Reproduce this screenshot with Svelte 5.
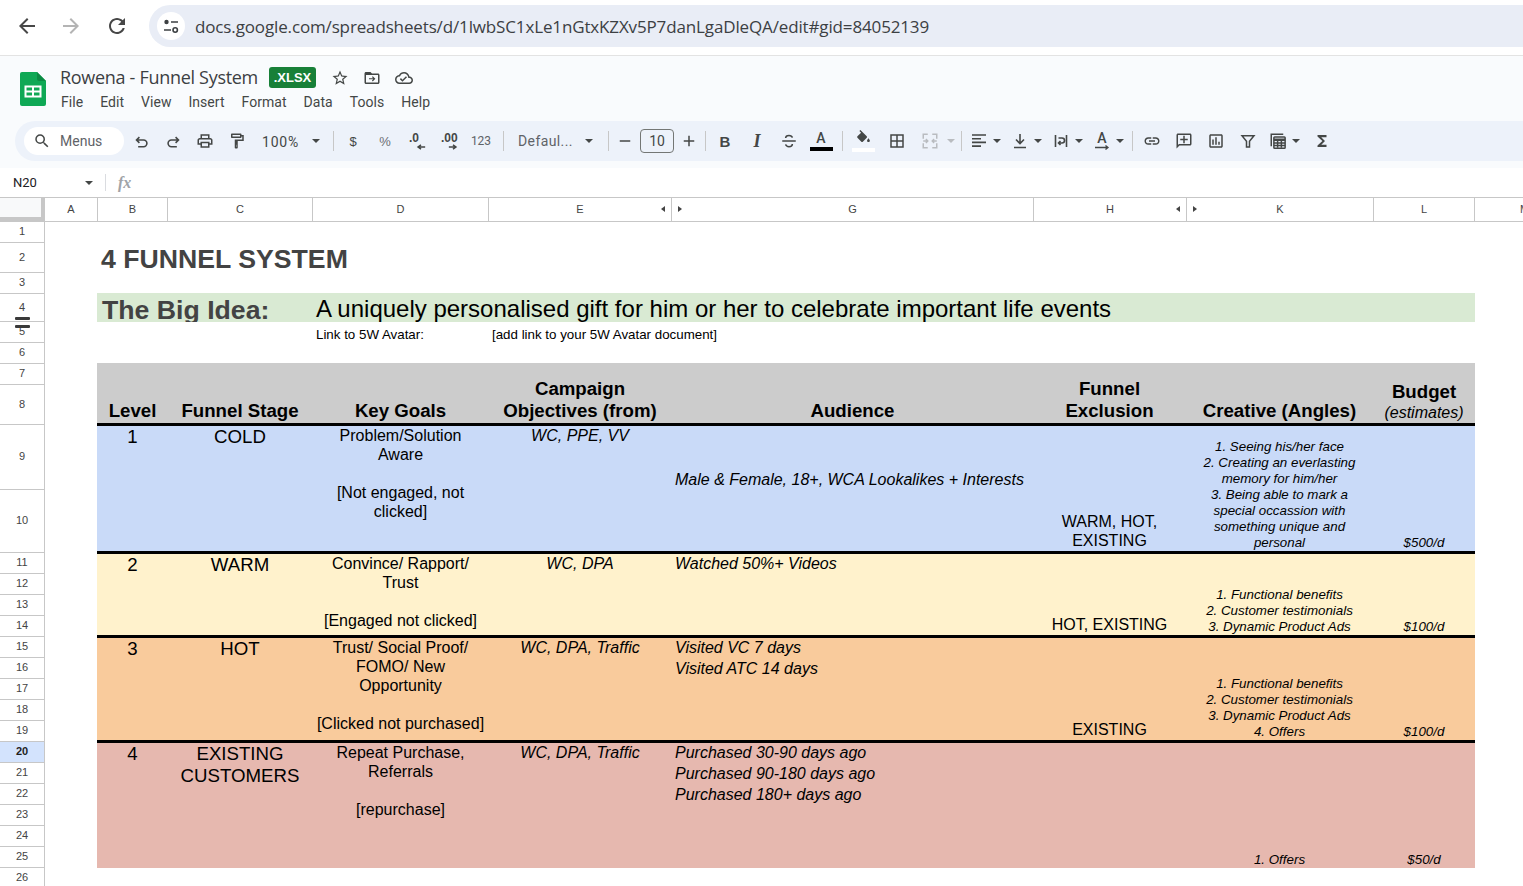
<script>
  const cols = ['A','B','C','D','E','G','H','K','L','M'];
  const rows = Array.from({ length: 26 }, (_, i) => i + 1);
  const bands = [
    { cls:'blue', level:'1', stage:'COLD', goals:'Problem/Solution\nAware\n\n[Not engaged, not\nclicked]', obj:'WC, PPE, VV',
      aud:'Male & Female, 18+, WCA Lookalikes + Interests', audCls:'mid', excl:'WARM, HOT,\nEXISTING',
      creative:'1. Seeing his/her face\n2. Creating an everlasting\nmemory for him/her\n3. Being able to mark a\nspecial occassion with\nsomething unique and\npersonal', budget:'$500/d' },
    { cls:'yellow', level:'2', stage:'WARM', goals:'Convince/ Rapport/\nTrust\n\n[Engaged not clicked]', obj:'WC, DPA',
      aud:'Watched 50%+ Videos', audCls:'', excl:'HOT, EXISTING',
      creative:'1. Functional benefits\n2. Customer testimonials\n3. Dynamic Product Ads', budget:'$100/d' },
    { cls:'orange', level:'3', stage:'HOT', goals:'Trust/ Social Proof/\nFOMO/ New\nOpportunity\n\n[Clicked not purchased]', obj:'WC, DPA, Traffic',
      aud:'Visited VC 7 days\nVisited ATC 14 days', audCls:'', excl:'EXISTING',
      creative:'1. Functional benefits\n2. Customer testimonials\n3. Dynamic Product Ads\n4. Offers', budget:'$100/d' },
    { cls:'red', level:'4', stage:'EXISTING\nCUSTOMERS', goals:'Repeat Purchase,\nReferrals\n\n[repurchase]', obj:'WC, DPA, Traffic',
      aud:'Purchased 30-90 days ago\nPurchased 90-180 days ago\nPurchased 180+ days ago', audCls:'', excl:'',
      creative:'1. Offers', budget:'$50/d' }
  ];
</script>

<div class="page">
  <header class="chrome">
    <button class="nav" aria-label="Back"><svg viewBox="0 0 24 24"><path d="M20 11H7.830l5.590-5.590L12 4l-8 8 8 8 1.410-1.410L7.830 13H20v-2z"/></svg></button>
    <button class="nav off" aria-label="Forward"><svg viewBox="0 0 24 24"><path d="M4 11h12.170l-5.590-5.590L12 4l8 8-8 8-1.410-1.410L16.170 13H4v-2z"/></svg></button>
    <button class="nav reload" aria-label="Reload"><svg viewBox="0 0 24 24"><path d="M17.650 6.350C16.200 4.900 14.210 4 12 4c-4.420 0-7.990 3.580-7.990 8s3.570 8 7.990 8c3.730 0 6.840-2.550 7.730-6h-2.080c-.82 2.330-3.040 4-5.650 4-3.310 0-6-2.690-6-6s2.690-6 6-6c1.660 0 3.140.69 4.220 1.780L13 11h7V4l-2.350 2.350z"/></svg></button>
    <div class="pill">
      <span class="site"><svg viewBox="0 0 18 18"><circle cx="4.500" cy="5" r="2.200" fill="#3c4043"/><path d="M9 5h7M2 13h7" stroke="#3c4043" stroke-width="1.700" fill="none"/><circle cx="13.200" cy="13" r="2.200" fill="none" stroke="#3c4043" stroke-width="1.600"/></svg></span>
      <span class="url">docs.google.com/spreadsheets/d/1lwbSC1xLe1nGtxKZXv5P7danLgaDleQA/edit#gid=84052139</span>
    </div>
  </header>

  <section class="docbar">
    <svg class="logo" viewBox="0 0 26 34"><path d="M2 0h15l9 9v23a2 2 0 0 1-2 2H2a2 2 0 0 1-2-2V2a2 2 0 0 1 2-2z" fill="#0fa855"/><path d="M17 0l9 9h-7a2 2 0 0 1-2-2z" fill="#0b8a43"/><path d="M5.500 14.500h15v10h-15z" fill="none" stroke="#fff" stroke-width="2"/><path d="M5.500 19.500h15M13 14.500v10" stroke="#fff" stroke-width="2"/></svg>
    <div class="docinfo">
      <div class="titlerow">
        <span class="doctitle">Rowena - Funnel System</span>
        <span class="badge">.XLSX</span>
        <svg class="ic star" viewBox="0 0 24 24"><path d="M22 9.240l-7.190-.62L12 2 9.190 8.630 2 9.240l5.460 4.730L5.820 21 12 17.270 18.180 21l-1.630-7.030L22 9.240zM12 15.400l-3.760 2.270 1-4.280-3.320-2.880 4.380-.38L12 6.100l1.710 4.040 4.380.38-3.320 2.880 1 4.280L12 15.400z"/></svg>
        <svg class="ic folder" viewBox="0 0 24 24"><path d="M20 6h-8l-2-2H4c-1.100 0-2 .9-2 2v12c0 1.100.9 2 2 2h16c1.100 0 2-.9 2-2V8c0-1.100-.9-2-2-2zm0 12H4V8h16v10z"/><path d="M13 9.500l-1.100 1.100 1.600 1.600H8v1.600h5.500l-1.600 1.600 1.100 1.100 3.500-3.500z"/></svg>
        <svg class="ic cloud" viewBox="0 0 24 24"><path d="M19.350 10.040C18.670 6.590 15.640 4 12 4 9.110 4 6.600 5.640 5.350 8.040 2.340 8.360 0 10.910 0 14c0 3.310 2.690 6 6 6h13c2.760 0 5-2.240 5-5 0-2.640-2.050-4.780-4.650-4.960zM19 18H6c-2.210 0-4-1.790-4-4 0-2.050 1.530-3.760 3.560-3.970l1.070-.11.5-.95C8.080 7.140 9.940 6 12 6c2.620 0 4.880 1.860 5.390 4.430l.3 1.500 1.530.11c1.560.1 2.780 1.410 2.780 2.960 0 1.650-1.350 3-3 3zm-9-3.820l-2.090-2.090L6.500 13.500 10 17l6.010-6.010-1.410-1.410z"/></svg>
      </div>
      <nav class="menu">
        {#each ['File','Edit','View','Insert','Format','Data','Tools','Help'] as m}<span>{m}</span>{/each}
      </nav>
    </div>
  </section>

  <section class="toolwrap">
    <div class="toolbar">
      <div class="search">
        <svg class="ic" viewBox="0 0 24 24"><path d="M15.500 14h-.79l-.28-.27A6.470 6.470 0 0 0 16 9.500 6.500 6.500 0 1 0 9.500 16c1.610 0 3.090-.59 4.230-1.570l.27.28v.79l5 4.990L20.490 19l-4.990-5zm-6 0C7.010 14 5 11.990 5 9.500S7.010 5 9.500 5 14 7.010 14 9.500 11.990 14 9.500 14z"/></svg>
        <span>Menus</span>
      </div>
      <span class="b"><svg class="st und" viewBox="0 0 18 18"><path d="M6.500 2.500L3 6l3.500 3.500M3 6h8.500a4 4 0 0 1 0 8H5"/></svg></span>
      <span class="b"><svg class="st und" viewBox="0 0 18 18"><path d="M11.500 2.500L15 6l-3.500 3.500M15 6H6.500a4 4 0 0 0 0 8H13"/></svg></span>
      <span class="b"><svg class="ic" viewBox="0 0 24 24"><path d="M19 8h-1V3H6v5H5c-1.660 0-3 1.340-3 3v6h4v4h12v-4h4v-6c0-1.660-1.340-3-3-3zM8 5h8v3H8V5zm8 12v2H8v-4h8v2zm2-2v-2H6v2H4v-4c0-.55.45-1 1-1h14c.55 0 1 .45 1 1v4h-2z"/></svg></span>
      <span class="b"><svg class="ic" viewBox="0 0 24 24"><path fill-rule="evenodd" d="M18 4V3c0-.55-.45-1-1-1H5c-.55 0-1 .45-1 1v4c0 .55.45 1 1 1h12c.55 0 1-.45 1-1V6h1v4H9v11c0 .55.45 1 1 1h2c.55 0 1-.45 1-1v-9h8V4h-3zm-2 2H6V4h10v2zM10.800 17h.4v3h-.4z"/></svg></span>
      <span class="zoomsel"><span>100%</span><i class="caret"></i></span>
      <i class="sep"></i>
      <span class="b t13">$</span>
      <span class="b t13 lite">%</span>
      <span class="b dec"><b>.0</b><svg viewBox="0 0 12 7"><path d="M11 3.500H3M6 1L2.500 3.500 6 6" fill="none" stroke="#444746" stroke-width="1.800"/></svg></span>
      <span class="b dec"><b>.00</b><svg viewBox="0 0 12 7"><path d="M1 3.500h8M6 1l3.500 2.500L6 6" fill="none" stroke="#444746" stroke-width="1.800"/></svg></span>
      <span class="b t11">123</span>
      <i class="sep"></i>
      <span class="fontsel"><span>Defaul...</span><i class="caret"></i></span>
      <i class="sep"></i>
      <span class="b minus"><svg class="ic" viewBox="0 0 24 24"><path d="M5 11h14v2H5z"/></svg></span>
      <span class="sizebox">10</span>
      <span class="b plus"><svg class="ic" viewBox="0 0 24 24"><path d="M19 13h-6v6h-2v-6H5v-2h6V5h2v6h6v2z"/></svg></span>
      <i class="sep tight"></i>
      <span class="b letter">B</span>
      <span class="b letter ital">I</span>
      <span class="b"><svg class="st" viewBox="0 0 24 24"><path d="M16.500 7.500C16 5.500 14 4.500 12 4.500S7.500 5.500 7.500 8M7.500 16.500c.5 2 2.500 3 4.500 3s4.500-1 4.500-3.500M3 12h18"/></svg></span>
      <span class="b colorbtn"><span class="aa">A</span><i class="bar black"></i></span>
      <i class="sep m5"></i>
      <span class="b w34 colorbtn"><svg class="ic fillic" viewBox="0 0 24 24"><path d="M16.560 8.940L7.620 0 6.210 1.410l2.380 2.380-5.150 5.150c-.59.59-.59 1.540 0 2.120l5.500 5.500c.29.29.68.44 1.060.44s.77-.15 1.060-.44l5.500-5.500c.59-.58.59-1.530 0-2.120zM19 11.500s-2 2.170-2 3.500c0 1.100.9 2 2 2s2-.9 2-2c0-1.330-2-3.500-2-3.500z"/></svg><i class="bar white"></i></span>
      <span class="b w34"><svg class="ic" viewBox="0 0 24 24"><path d="M3 3v18h18V3H3zm8 16H5v-6h6v6zm0-8H5V5h6v6zm8 8h-6v-6h6v6zm0-8h-6V5h6v6z"/></svg></span>
      <span class="b"><svg class="st grey" viewBox="0 0 24 24"><path d="M3 9V3h6M15 3h6v6M21 15v6h-6M9 21H3v-6M3 12h6M6.500 9.500L9 12l-2.500 2.500M21 12h-6M17.500 9.500L15 12l2.500 2.500"/></svg></span>
      <span class="caretbox"><i class="caret grey"></i></span>
      <i class="sep m5"></i>
      <span class="dd"><svg class="st wide" viewBox="0 0 18 18"><path d="M2 3h14M2 6.700h9M2 10.400h14M2 14.100h9"/></svg><i class="caret"></i></span>
      <span class="dd"><svg class="st wide" viewBox="0 0 18 18"><path d="M9 2v9M5 7.500L9 11.500l4-4M3 15.500h12"/></svg><i class="caret"></i></span>
      <span class="dd"><svg class="st wide" viewBox="0 0 18 18"><path d="M3.500 3v12M14.500 3v12M6.500 6h3.500a2.500 2.500 0 0 1 0 5H7M8.500 9L6.500 11l2 2"/></svg><i class="caret"></i></span>
      <span class="dd"><span class="rot"><span>A</span><svg viewBox="0 0 18 5"><path d="M2 2.500h13M12.500 .5l2.500 2-2.500 2" fill="none" stroke="#444746" stroke-width="1.300"/></svg></span><i class="caret"></i></span>
      <i class="sep m3"></i>
      <span class="b"><svg class="ic" viewBox="0 0 24 24"><path d="M3.900 12c0-1.710 1.390-3.100 3.100-3.100h4V7H7c-2.760 0-5 2.240-5 5s2.240 5 5 5h4v-1.900H7c-1.710 0-3.100-1.390-3.100-3.100zM8 13h8v-2H8v2zm9-6h-4v1.900h4c1.710 0 3.100 1.390 3.100 3.100s-1.390 3.100-3.100 3.100h-4V17h4c2.760 0 5-2.240 5-5s-2.240-5-5-5z"/></svg></span>
      <span class="b"><svg class="ic" viewBox="0 0 24 24"><path d="M2 4c0-1.100.9-2 2-2h16c1.100 0 2 .9 2 2v12c0 1.100-.9 2-2 2H6l-4 4V4zm2 13.170L5.170 16H20V4H4v13.170zM11 5h2v4h4v2h-4v4h-2v-4H7V9h4V5z"/></svg></span>
      <span class="b"><svg class="ic" viewBox="0 0 24 24"><path d="M9 17H7v-7h2v7zm4 0h-2V7h2v10zm4 0h-2v-4h2v4zm2 2H5V5h14v14zm0-16H5c-1.100 0-2 .9-2 2v14c0 1.100.9 2 2 2h14c1.100 0 2-.9 2-2V5c0-1.100-.9-2-2-2z"/></svg></span>
      <span class="b"><svg class="st" viewBox="0 0 24 24"><path d="M4 5h16l-6 7.500V20h-4v-7.500z"/></svg></span>
      <span class="dd"><svg class="st wide thin" viewBox="0 0 24 24"><path d="M3 19V3h16"/><rect x="6.500" y="6.500" width="15" height="15" rx="1"/><path d="M6.500 9.500h15M6.500 11h15M6.500 14.500h15M6.500 18h15M11.500 12v9M16.500 12v9"/></svg><i class="caret"></i></span>
      <span class="b sigma"><svg class="ic" viewBox="0 0 24 24"><path d="M18 4H6v2l6.500 6L6 18v2h12v-3h-7l5-5-5-5h7z"/></svg></span>
    </div>
  </section>

  <section class="namebar">
    <span class="cellref">N20</span><i class="caret"></i><i class="namesep"></i><span class="fx">fx</span>
  </section>

  <section class="colhead">
    <span class="corner"></span>
    {#each cols as c}
      <span class="col">{c}
        {#if c === 'E' || c === 'H'}<i class="arr left"></i>{/if}
        {#if c === 'G' || c === 'K'}<i class="arr right"></i>{/if}
      </span>
    {/each}
  </section>

  <section class="sheet">
    <aside class="rowhead">
      {#each rows as r}<span class:sel={r === 20}>{r}</span>{/each}
      <i class="hid one"></i><i class="hid two"></i>
    </aside>
    <main class="cells">
      <div class="title">4 FUNNEL SYSTEM</div>
      <div class="idea"><span class="ideal">The Big Idea:</span><span class="ideat">A uniquely personalised gift for him or her to celebrate important life events</span></div>
      <div class="link"><span>Link to 5W Avatar:</span><span>[add link to your 5W Avatar document]</span></div>

      <div class="band head">
        <div class="h">Level</div>
        <div class="h">Funnel Stage</div>
        <div class="h">Key Goals</div>
        <div class="h">Campaign{'\n'}Objectives (from)</div>
        <div class="h">Audience</div>
        <div class="h">Funnel{'\n'}Exclusion</div>
        <div class="h">Creative (Angles)</div>
        <div class="h">Budget<div class="est">(estimates)</div></div>
      </div>

      {#each bands as b}
        <div class="band {b.cls}">
          <div class="big">{b.level}</div>
          <div class="big">{b.stage}</div>
          <div class="txt">{b.goals}</div>
          <div class="txt it">{b.obj}</div>
          <div class="aud {b.audCls}">{b.aud}</div>
          <div class="txt end">{b.excl}</div>
          <div class="small">{b.creative}</div>
          <div class="small">{b.budget}</div>
        </div>
      {/each}
    </main>
  </section>
</div>

<style>
  :global(body) { margin: 0; background: #fff; }
  .page { width: 1523px; height: 886px; overflow: hidden; font-family: "Liberation Sans", Arial, sans-serif; color: #000; background: #fff; }
  i { font-style: normal; display: block; }

  .chrome { height: 50px; padding: 5px 0 0 5px; border-bottom: 1px solid #e3e3e3; display: flex; align-items: flex-start; }
  .nav { width: 44px; height: 44px; border: 0; background: none; padding: 10px; margin: -1px 0 0; }
  .nav svg { display: block; width: 24px; height: 24px; fill: #474747; }
  .nav.off svg { fill: #b4b4b4; }
  .nav.reload { margin-left: 2px; }
  .pill { margin-left: 10px; height: 42px; flex: 1; background: #e9edf6; border-radius: 21px 0 0 21px; display: flex; align-items: center; padding-left: 8px; }
  .site { width: 28px; height: 28px; border-radius: 50%; background: #fff; display: flex; align-items: center; justify-content: center; }
  .site svg { width: 18px; height: 18px; }
  .url { margin-left: 10px; font: 17px "Open Sans", sans-serif; color: #3c4043; letter-spacing: -.14px; white-space: nowrap; }

  .docbar { height: 65px; background: #f9fbfd; display: flex; padding-left: 20px; }
  .logo { width: 26px; height: 34px; margin-top: 16px; flex: none; }
  .docinfo { margin-left: 14px; padding-top: 7px; }
  .titlerow { height: 28px; display: flex; align-items: center; }
  .doctitle { font: 18px "Open Sans", sans-serif; color: #3c4043; letter-spacing: -.3px; white-space: nowrap; margin-top: -1px; }
  .badge { margin-left: 11px; width: 47px; height: 21px; border-radius: 3px; background: #188038; color: #fff; font: 700 13px/21px "Liberation Sans", sans-serif; text-align: center; }
  .ic { width: 18px; height: 18px; fill: #444746; display: block; flex: none; }
  .titlerow .ic { margin-top: 2px; }
  .star { margin-left: 15px; }
  .folder, .cloud { margin-left: 14px; }
  .menu { margin-left: 1px; display: flex; gap: 17px; font: 14px/22px Roboto, sans-serif; color: #444746; letter-spacing: .04px; }

  .toolwrap { height: 47px; background: #f9fbfd; padding-left: 15px; }
  .toolbar { height: 40px; background: #edf2fa; border-radius: 20px 0 0 20px; display: flex; align-items: center; padding-left: 9px; color: #444746; font: 14px Roboto, sans-serif; }
  .search { width: 100px; height: 28px; margin-right: 1px; background: #fff; border-radius: 14px; display: flex; align-items: center; padding-left: 9px; box-sizing: border-box; gap: 9px; color: #5f6368; flex: none; }
  .search span { margin-top: -1px; }
  .b { width: 32px; height: 32px; display: flex; align-items: center; justify-content: center; flex: none; }
  .st { width: 18px; height: 18px; fill: none; stroke: #444746; stroke-width: 1.6; flex: none; }
  .st[viewBox="0 0 24 24"] { stroke-width: 2; }
  .st.und { width: 15px; height: 15px; stroke-width: 1.9; margin-top: 2px; }
  .st.grey { stroke: #b9bcc0; }
  .st.wide { width: 18px; height: 18px; margin: 0 3px; }
  .caret { width: 0; height: 0; border-left: 4px solid transparent; border-right: 4px solid transparent; border-top: 4px solid #444746; flex: none; }
  .caret.grey { border-top-color: #b9bcc0; }
  .zoomsel { width: 74px; padding-left: 9px; box-sizing: border-box; display: flex; align-items: center; flex: none; }
  .zoomsel span { width: 50px; padding-top: 1px; letter-spacing: .8px; }
  .sep { width: 1px; height: 20px; background: #c7c7c7; margin: 0 3px 0 6px; flex: none; }
  .sep.tight { margin-left: 1px; }
  .sep.m5 { margin-left: 5px; }
  .sep.m3 { margin-left: 3px; }
  .t13 { font: 13px "Liberation Sans", sans-serif; }
  .lite { color: #6c6f73; }
  .t11 { font-size: 12px; color: #5f6368; }
  .dec { flex-direction: column; justify-content: flex-start; align-items: flex-start; padding: 7px 0 0 8px; box-sizing: border-box; font: 700 12px/12px "Liberation Sans", sans-serif; }
  .dec svg { width: 10px; height: 6px; margin-left: 7px; }
  .fontsel { width: 95px; padding-left: 11px; box-sizing: border-box; display: flex; align-items: center; flex: none; color: #5f6368; }
  .fontsel span { width: 67px; letter-spacing: .4px; }
  .minus { width: 26px; }
  .sizebox { width: 34px; height: 24px; margin-left: 2px; box-sizing: border-box; border: 1px solid #747775; border-radius: 4px; text-align: center; line-height: 22px; flex: none; }
  .plus { width: 30px; }
  .letter { font: 700 15px "Liberation Sans", sans-serif; padding-top: 1px; box-sizing: border-box; }
  .ital { font: italic 700 18px "Liberation Serif", serif; }
  .w34 { width: 34px; }
  .colorbtn { flex-direction: column; justify-content: flex-start; padding-top: 3px; box-sizing: border-box; }
  .aa { font: 500 14px/15px Roboto, sans-serif; height: 15px; margin: 3px 0 1px; }
  .fillic { margin-top: 2px; margin-bottom: 1px; width: 17px; height: 17px; }
  .bar { width: 23px; height: 4px; }
  .bar.black { background: #000; }
  .bar.white { background: #fff; }
  .caretbox { width: 10px; display: flex; justify-content: center; flex: none; }
  .dd { width: 41px; padding-left: 2px; box-sizing: border-box; display: flex; align-items: center; flex: none; }
  .dd .caret { margin-left: 2px; }
  .rot { width: 24px; display: flex; flex-direction: column; align-items: center; font: 500 14px/12px Roboto, sans-serif; }
  .rot svg { width: 18px; height: 5px; margin-top: 1px; }
  .sigma { margin-left: 1px; }

  .namebar { height: 29px; display: flex; align-items: center; position: relative; padding-left: 13px; font: 13px Roboto, sans-serif; color: #202124; }
  .cellref { width: 72px; }
  .namesep { width: 1px; height: 17px; background: #dadce0; margin-left: 12px; }
  .fx { margin-left: 12px; font: italic 700 16px "Liberation Serif", serif; color: #a0a3a7; }

  .colhead { height: 25px; box-sizing: border-box; border-top: 1px solid #c7c7c7; border-bottom: 1px solid #c7c7c7; display: grid; grid-template-columns: 45px 53px 70px 145px 176px 183px 362px 153px 187px 101px 100px; font: 11px/23px "Liberation Sans", sans-serif; color: #444; }
  .corner { background: #f8f9fa; border-right: 4px solid #c7c7c7; border-bottom: 4px solid #c7c7c7; height: 19px; }
  .col { border-right: 1px solid #c7c7c7; text-align: center; position: relative; }
  .arr { position: absolute; top: 8px; width: 0; height: 0; border-top: 3.500px solid transparent; border-bottom: 3.500px solid transparent; }
  .arr.left { right: 6px; border-right: 4px solid #444; }
  .arr.right { left: 6px; border-left: 4px solid #444; }

  .sheet { display: flex; }
  .rowhead { width: 45px; flex: none; position: relative; display: grid; grid-template-rows: 21px 30px 21px 28px 21px 21px 21px 40px 65px 63px repeat(16, 21px); border-right: 1px solid #c7c7c7; box-sizing: border-box; font: 11px "Liberation Sans", sans-serif; color: #444; }
  .rowhead span { border-bottom: 1px solid #c7c7c7; display: flex; align-items: center; justify-content: center; box-sizing: border-box; padding-bottom: 2px; }
  .rowhead .sel { background: #d3e3fd; font-weight: 700; color: #1f1f1f; }
  .hid { position: absolute; left: 15px; width: 15px; height: 3px; background: #3a3a3a; border-radius: 1px; }
  .hid.one { top: 95px; }
  .hid.two { top: 103px; }

  .cells { width: 1378px; margin-left: 52px; flex: none; }
  .title { height: 71px; box-sizing: border-box; padding: 22px 0 0 4px; font: 700 26.670px/30px "Liberation Sans", sans-serif; color: #434343; white-space: nowrap; }
  .idea { height: 29px; background: #d9ead3; overflow: hidden; display: flex; white-space: nowrap; }
  .ideal { width: 214px; padding: 3px 0 0 5px; font: 700 26.670px/29px "Liberation Sans", sans-serif; color: #434343; }
  .ideat { padding-top: 1px; font: 24px/29px "Liberation Sans", sans-serif; }
  .link { height: 41px; box-sizing: border-box; padding: 3px 0 0 219px; display: flex; font: 13.330px/19px "Liberation Sans", sans-serif; white-space: nowrap; }
  .link span:first-child { width: 176px; }

  .band { display: grid; grid-template-columns: 70px 145px 176px 183px 362px 153px 187px 102px; box-sizing: border-box; border-top: 3px solid #000; white-space: pre-line; text-align: center; }
  .band > :nth-child(-n+5) { padding-left: 1px; }
  .band.head { height: 60px; background: #ccc; border-top: 0; }
  .blue { height: 128px; background: #c9daf8; }
  .yellow { height: 84px; background: #fff2cc; }
  .orange { height: 105px; background: #f9cb9c; }
  .red { height: 128px; background: #e6b8af; }
  .h { align-self: end; padding-bottom: 1px; font: 700 18.670px/22px "Liberation Sans", sans-serif; }
  .est { font: italic 400 16px/19px "Liberation Sans", sans-serif; }
  .big { font: 18.670px/22px "Liberation Sans", sans-serif; }
  .txt { font: 16px/19px "Liberation Sans", sans-serif; }
  .it { font-style: italic; }
  .end { align-self: end; padding-bottom: 1px; }
  .band > .aud { font: italic 16px/21px "Liberation Sans", sans-serif; text-align: left; padding-left: 4px; margin-top: -1px; }
  .band > .aud.mid { padding-top: 44px; }
  .small { align-self: end; font: italic 13.330px/16px "Liberation Sans", sans-serif; }
</style>
